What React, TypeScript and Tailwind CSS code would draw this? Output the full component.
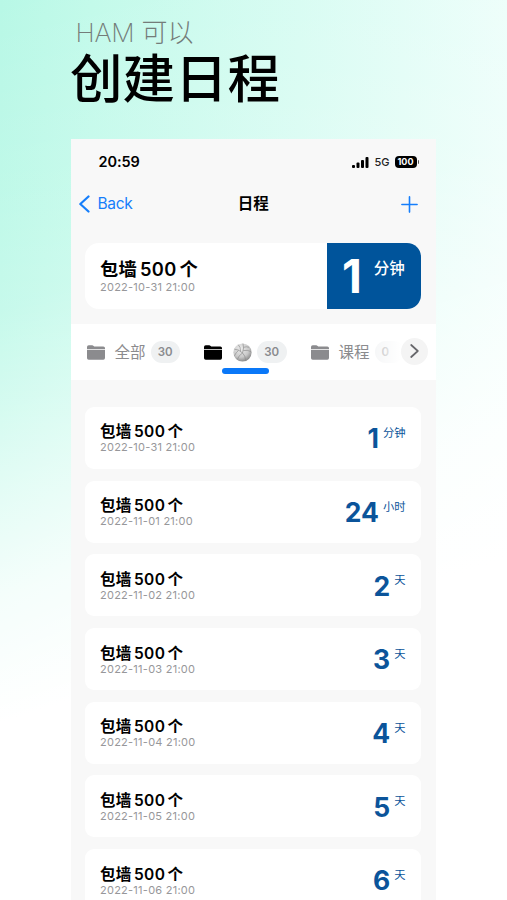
const events = [
  { date: "2022-10-31 21:00", value: "1", unit: "分钟" },
  { date: "2022-11-01 21:00", value: "24", unit: "小时" },
  { date: "2022-11-02 21:00", value: "2", unit: "天" },
  { date: "2022-11-03 21:00", value: "3", unit: "天" },
  { date: "2022-11-04 21:00", value: "4", unit: "天" },
  { date: "2022-11-05 21:00", value: "5", unit: "天" },
  { date: "2022-11-06 21:00", value: "6", unit: "天" },
];

function FolderIcon({ className }: { className: string }) {
  return (
    <svg viewBox="0 0 18 15" className={`h-[15px] w-[18px] shrink-0 ${className}`} fill="currentColor">
      <path d="M0 3.900V2Q0 .3 1.700 .3H5.200Q6 .3 6.600 .9L7.200 1.400H16.300Q18 1.400 18 3V3.900Z" />
      <path d="M0 4.700H18V13Q18 14.700 16.300 14.700H1.700Q0 14.700 0 13Z" />
    </svg>
  );
}

function BallIcon() {
  return (
    <svg viewBox="0 0 20 20" className="h-[19px] w-[19px] shrink-0">
      <defs>
        <radialGradient id="ball" cx="0.4" cy="0.3" r="0.75">
          <stop offset="0" stopColor="#ededed" />
          <stop offset="0.6" stopColor="#c9c9c9" />
          <stop offset="1" stopColor="#808080" />
        </radialGradient>
      </defs>
      <circle cx="10" cy="10" r="9.600" fill="url(#ball)" />
      <g fill="none" stroke="#8c8c8c" strokeWidth="0.7">
        <path d="M10 10.500Q6 6.500 1.500 6.500" />
        <path d="M10 10.500Q12 5 10.500 .6" />
        <path d="M10 10.500Q13 13 13.500 19" />
        <path d="M10.800 8Q15 7 19 9M11.300 4.500Q14 3.500 17 4.500M8 8.600Q8 4 5.500 1.800M10 10.500Q6 13 4.500 17.500M6 7.600Q3 10 1.500 13.500" />
      </g>
    </svg>
  );
}

function Badge({ children, className = "" }: { children: string; className?: string }) {
  return (
    <span className={`flex h-[21.5px] w-[29.5px] shrink-0 items-center justify-center rounded-full bg-[#eff1f2] pt-px text-[11.5px] font-semibold text-[#8a8b8e] ${className}`}>
      {children}
    </span>
  );
}

function StatusBar() {
  return (
    <div className="flex h-[46px] items-center justify-between pr-[17px] pl-7">
      <span className="text-[14.5px] font-semibold tracking-[-0.1px]">20:59</span>
      <div className="flex items-center">
        <svg viewBox="0 0 17 11" className="h-[11px] w-[17px]">
          <rect x="0" y="8" width="3" height="3" rx="1" />
          <rect x="4.500" y="5.500" width="3" height="5.500" rx="1" />
          <rect x="9" y="3" width="3" height="8" rx="1" />
          <rect x="13.500" y="0" width="3" height="11" rx="1" />
        </svg>
        <span className="ml-[5px] text-[11px] font-medium text-[#222]">5G</span>
        <span className="ml-[5px] flex h-3 w-[22px] items-center justify-center rounded-[4px] bg-black text-[9px] font-bold text-white">100</span>
        <span className="ml-px h-1 w-[1.5px] rounded-r-full bg-[#555]" />
      </div>
    </div>
  );
}

function NavBar() {
  return (
    <div className="grid h-[38px] grid-cols-[1fr_auto_1fr] items-center text-[#157efb]">
      <div className="flex items-center pl-2">
        <svg viewBox="0 0 11 18" className="h-[18px] w-[11px]" fill="none" stroke="currentColor" strokeWidth="2.200" strokeLinecap="round" strokeLinejoin="round">
          <path d="M9.500 1.500L1.300 9L9.500 16.500" />
        </svg>
        <span className="ml-2 text-[15.5px] tracking-[-0.3px]">Back</span>
      </div>
      <span className="text-[15.5px] font-bold text-black">日程</span>
      <div className="flex justify-end pr-[18px]">
        <svg viewBox="0 0 17 17" className="size-[17px]" stroke="currentColor" strokeWidth="1.600" strokeLinecap="round">
          <path d="M8.500 .9V16.100M.9 8.500H16.100" />
        </svg>
      </div>
    </div>
  );
}

function Tabs() {
  return (
    <div className="relative mt-[15.5px] h-14 overflow-hidden bg-white text-[15.5px] text-[#8b8b8e]">
      <div className="flex h-full items-center pl-4">
        <FolderIcon className="text-[#8b8b8e]" />
        <span className="ml-[10px] w-[31px] shrink-0 pt-px">全部</span>
        <Badge className="ml-[5px]">30</Badge>
        <FolderIcon className="ml-6 text-black" />
        <span className="ml-[11px] flex"><BallIcon /></span>
        <Badge className="ml-[5px]">30</Badge>
        <FolderIcon className="ml-6 text-[#8b8b8e]" />
        <span className="ml-[10px] w-[31px] shrink-0 pt-px">课程</span>
        <Badge className="ml-[5px] justify-start pl-[7px] opacity-60">0</Badge>
      </div>
      {/* active tab underline */}
      <div className="absolute top-[44px] left-[151px] h-[5.5px] w-[47px] rounded-full bg-[#0a78f8]" />
      {/* scroll button with fade */}
      <div className="absolute inset-y-0 right-0 flex w-[64px] items-center justify-end bg-linear-to-r from-white/0 to-white to-45% pr-2">
        <span className="mb-[2px] flex size-[27px] items-center justify-center rounded-full bg-[#f4f4f4]">
          <svg viewBox="0 0 9 14" className="h-[14px] w-[9px]" fill="none" stroke="#66666a" strokeWidth="1.700" strokeLinecap="round" strokeLinejoin="round">
            <path d="M1.200 1L7.800 7L1.200 13" />
          </svg>
        </span>
      </div>
    </div>
  );
}

export default function App() {
  return (
    <div className="h-[900px] w-full overflow-hidden bg-[linear-gradient(162deg,rgba(255,255,255,0)_0%,rgba(255,255,255,0.1)_18%,rgba(255,255,255,0.2)_29%,rgba(255,255,255,0.4)_38%,rgba(255,255,255,0.63)_47%,rgba(255,255,255,0.85)_56%,#fff_68%),linear-gradient(to_right,#b8f8e6,#c2faea_18%,#ecfefa)] font-[Inter,'Noto_Sans_CJK_SC',sans-serif] text-black">
      <header className="h-[139px] pt-[17px]">
        <p className="pl-[75.5px] text-[26px] leading-[31px] font-extralight tracking-[-0.2px] text-[#747c79]">HAM 可以</p>
        <h1 className="pt-px pl-[70px] text-[52.5px] leading-[60px] font-medium">创建日程</h1>
      </header>

      <main className="ml-[70.5px] h-[761px] w-[365.5px] bg-[#f8f8f8]">
        <StatusBar />
        <NavBar />

        <div className="mr-[15.5px] ml-[14.5px] mt-5 flex h-[65.5px] overflow-hidden rounded-[14px] bg-white">
          <div className="flex flex-1 flex-col pt-[15px] pl-[15px]">
            <span className="text-[18.3px] leading-[22px] font-semibold tracking-[0.3px] [word-spacing:-2px]">包墙 500 个</span>
            <span className="text-[11px] leading-[14px] tracking-[0.25px] text-[#97979a]">2022-10-31 21:00</span>
          </div>
          <div className="flex w-[93.5px] bg-[#00549b] text-white">
            <span className="ml-[15px] pt-[10.5px] text-[46px] leading-[44px] font-bold">1</span>
            <span className="ml-[12px] pt-[15px] text-[15.5px] leading-[22px] font-medium">分钟</span>
          </div>
        </div>

        <Tabs />

        <div className="mr-[15.5px] ml-[14.5px] mt-[26.9px] flex flex-col gap-[11.7px]">
          {events.map((event) => (
            <div key={event.date} className="flex h-[62px] shrink-0 justify-between rounded-[9px] bg-white px-[15px]">
              <div className="flex flex-col pt-[15.6px]">
                <span className="text-[15.5px] leading-[19px] font-semibold tracking-[0.35px] [word-spacing:-2px]">包墙 500 个</span>
                <span className="text-[11px] leading-[13px] tracking-[0.25px] text-[#97979a]">{event.date}</span>
              </div>
              <div className="flex text-[#0b549a]">
                <span className="pt-[16.3px] text-[26.5px] leading-[31px] font-bold">{event.value}</span>
                <span className="ml-1 pt-[18px] text-[11.3px] leading-4">{event.unit}</span>
              </div>
            </div>
          ))}
        </div>
      </main>
    </div>
  );
}
